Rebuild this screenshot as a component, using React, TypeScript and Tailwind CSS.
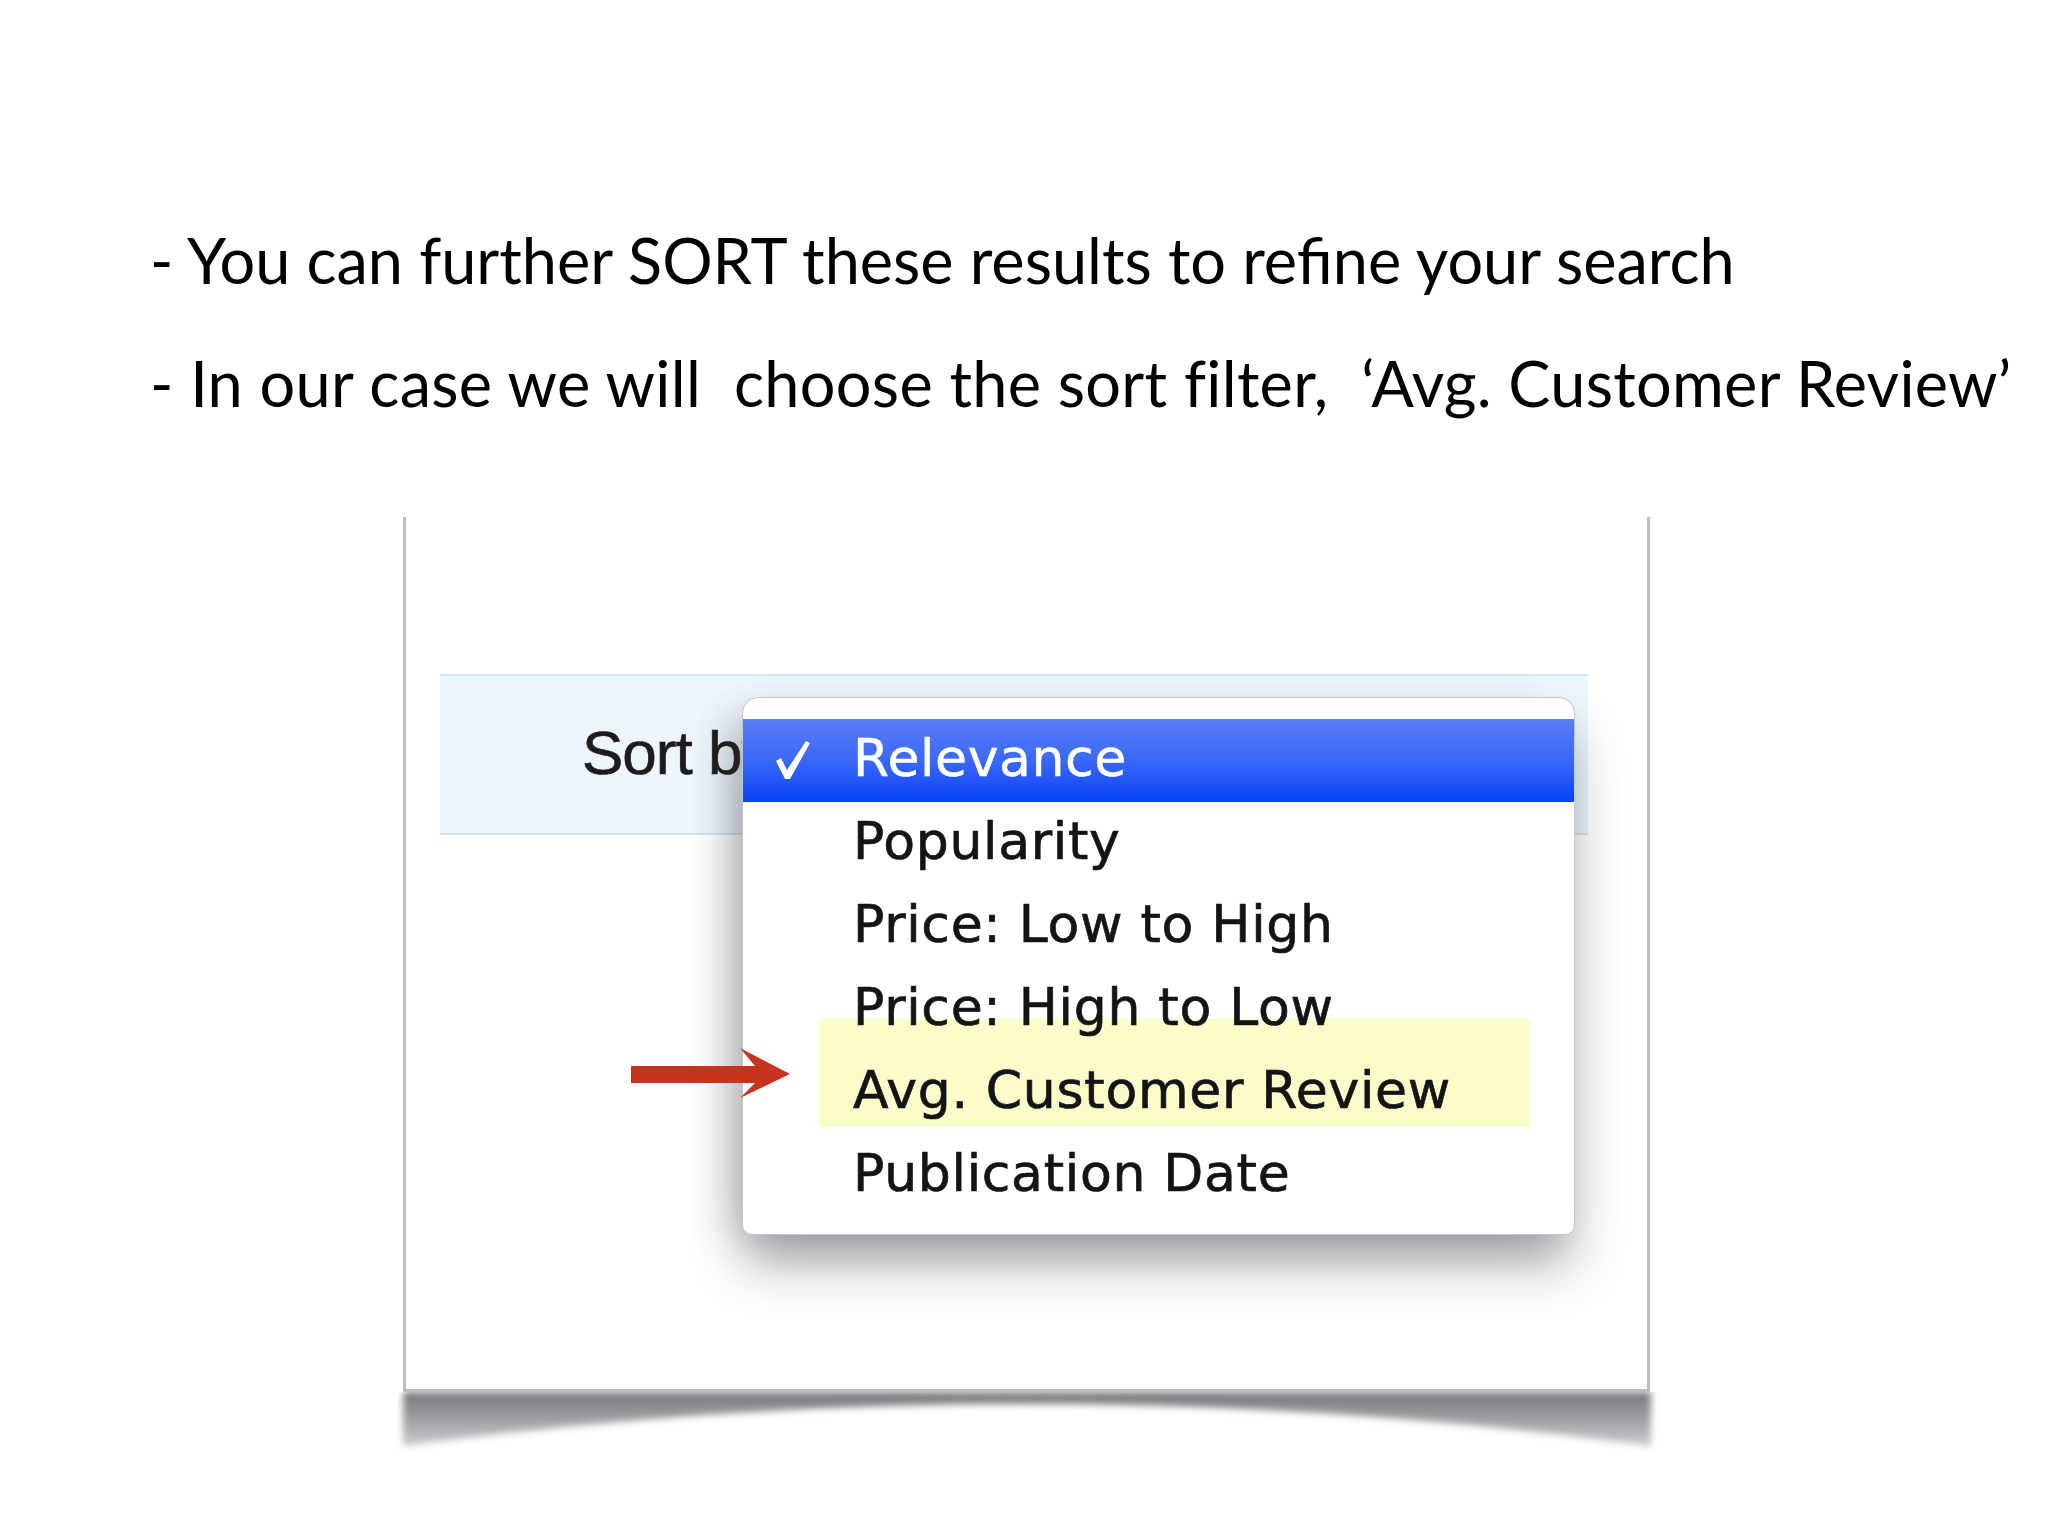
import React from 'react'

const items = ['Popularity', 'Price: Low to High', 'Price: High to Low', 'Avg. Customer Review', 'Publication Date']

function Check() {
  return (
    <svg width="38" height="40" viewBox="0 0 38 40" className="absolute left-[30px] top-[21px]">
      <path d="M3 21 L8 18 L14 30 L33 1 L37 3 L17 39 L12 39 Z" fill="#ffffff" />
    </svg>
  )
}

function Arrow() {
  return (
    <svg width="160" height="50" viewBox="0 0 160 50" className="absolute z-10 left-[225px] top-[531px]">
      <path d="M0 18 L124 18 L109 0 L159 26 L109 50 L124 35 L0 35 Z" fill="#c8321f" />
    </svg>
  )
}

function CurlShadow() {
  return (
    <svg width="1260" height="70" viewBox="0 0 1260 70" className="-ml-[6px] block">
      <defs>
        <linearGradient id="curl" x1="0" y1="0" x2="0" y2="1">
          <stop offset="0" stopColor="#77777b" />
          <stop offset="1" stopColor="#cacace" />
        </linearGradient>
        <filter id="soft" x="-5%" y="-50%" width="110%" height="200%">
          <feGaussianBlur stdDeviation="3.5" />
        </filter>
      </defs>
      <path d="M6 0 L1254 0 L1254 54 Q630 -30 6 54 Z" fill="url(#curl)" filter="url(#soft)" />
    </svg>
  )
}

function MenuRow({ label }: { label: string }) {
  return (
    <div className="flex items-center h-[83px] pl-[110px] pb-[6px] text-[52px] tracking-[0.7px] text-[#141414] [-webkit-text-stroke:0.7px_#141414]">
      {label}
    </div>
  )
}

export default function App() {
  return (
    <div className="flex flex-col w-[2048px] h-[1536px] bg-white overflow-hidden font-['Lato',sans-serif] text-black">
      <div className="flex flex-col pt-[198px] pl-[150px] text-[63px] leading-[123px]">
        <p className="whitespace-pre">- You can further SORT these results to refine your search</p>
        <p className="whitespace-pre tracking-[0.3px]">- In our case we will  choose the sort filter,  ‘Avg. Customer Review’</p>
      </div>

      <div className="flex flex-col ml-[403px] mt-[73px] w-[1247px]">
        <div className="relative flex flex-col pt-[157px] h-[875px] bg-white border-x-[3px] border-b-[3px] border-[#bdbdc0]">
          {/* sort bar */}
          <div className="flex items-center ml-[34px] w-[1148px] h-[161px] bg-[#eef5fc] border-y-2 border-[#d3e4ec] pl-[142px] pb-[4px]">
            <span className="text-[62px] tracking-[-1px] text-[#1c1c1c] font-['Liberation_Sans',Arial,sans-serif] [-webkit-text-stroke:0.6px_#1c1c1c]">
              Sort by
            </span>
          </div>

          {/* dropdown menu */}
          <div className="absolute left-[336px] top-[180px] flex flex-col w-[833px] h-[538px] bg-white rounded-t-[16px] rounded-b-[10px] border border-[#c6c6ca] pt-[21px] shadow-[0_32px_50px_-4px_rgba(60,60,70,0.45),-24px_10px_40px_-10px_rgba(60,60,70,0.2)] font-['DejaVu_Sans',sans-serif]">
            <div className="absolute left-[76px] top-[321px] w-[711px] h-[108px] bg-[#fcfccb]" />
            <div className="relative flex items-center h-[83px] pb-[6px] bg-[linear-gradient(to_bottom,#5b7ef8,#3a68f7_50%,#0842f5)] text-white pl-[110px] text-[52px] tracking-[0.6px] [-webkit-text-stroke:0.5px_#ffffff]">
              <Check />
              Relevance
            </div>
            <div className="relative flex flex-col">
              {items.map((label) => (
                <MenuRow key={label} label={label} />
              ))}
            </div>
          </div>

          <Arrow />
        </div>
        <CurlShadow />
      </div>
    </div>
  )
}
